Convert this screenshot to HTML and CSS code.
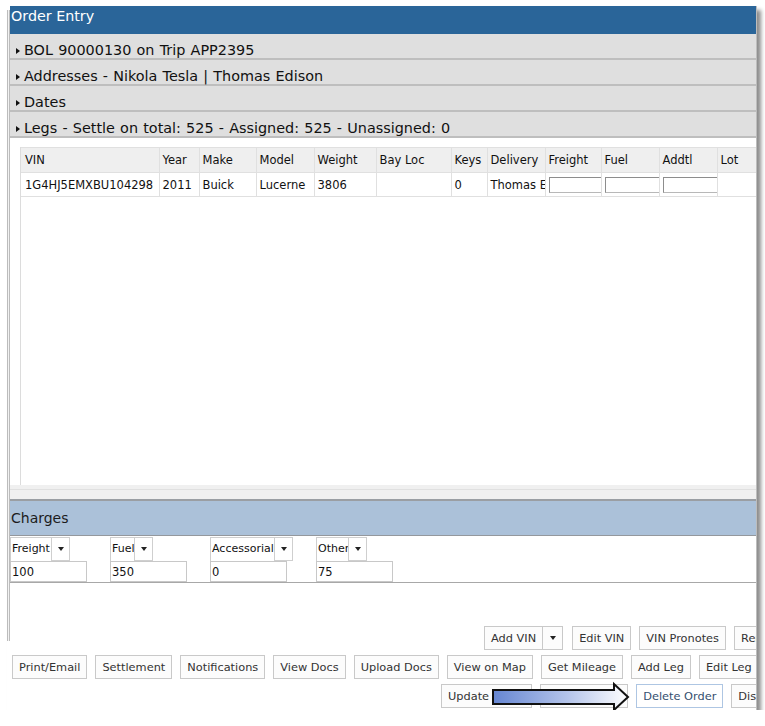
FILE: index.html
```html
<!DOCTYPE html>
<html lang="en">
<head>
    <meta charset="UTF-8">
    <meta name="viewport" content="width=device-width, initial-scale=1.0">
    <title>Order Entry</title>
    <link rel="stylesheet" href="styles.css">
</head>
<body>

    <div class="window">
        <div class="title">Order Entry</div>

        <!-- Collapsed sections -->
        <div class="section-head"><span class="caret"></span>BOL 90000130 on Trip APP2395</div>
        <div class="section-head"><span class="caret"></span>Addresses - Nikola Tesla | Thomas Edison</div>
        <div class="section-head"><span class="caret"></span>Dates</div>
        <div class="section-head"><span class="caret"></span>Legs - Settle on total: 525 - Assigned: 525 - Unassigned: 0</div>

        <!-- Legs grid -->
        <div class="legs">
            <div class="grid-box">
                <table class="legs-table">
                    <colgroup>
                        <col class="c-vin"><col class="c-year"><col class="c-make"><col class="c-model">
                        <col class="c-weight"><col class="c-bay"><col class="c-keys"><col class="c-delivery">
                        <col class="c-freight"><col class="c-fuel"><col class="c-addtl"><col class="c-lot">
                    </colgroup>
                    <thead>
                        <tr>
                            <th>VIN</th>
                            <th>Year</th>
                            <th>Make</th>
                            <th>Model</th>
                            <th>Weight</th>
                            <th>Bay Loc</th>
                            <th>Keys</th>
                            <th>Delivery</th>
                            <th>Freight</th>
                            <th>Fuel</th>
                            <th>Addtl</th>
                            <th>Lot</th>
                        </tr>
                    </thead>
                    <tbody>
                        <tr>
                            <td>1G4HJ5EMXBU104298</td>
                            <td>2011</td>
                            <td>Buick</td>
                            <td>Lucerne</td>
                            <td>3806</td>
                            <td></td>
                            <td>0</td>
                            <td>Thomas Edison</td>
                            <td class="input-cell"><input class="cell-input" type="text"></td>
                            <td class="input-cell"><input class="cell-input" type="text"></td>
                            <td class="input-cell"><input class="cell-input" type="text"></td>
                            <td></td>
                        </tr>
                    </tbody>
                </table>
            </div>
        </div>
        <div class="scroll-strip"></div>

        <!-- Charges -->
        <div class="charges-bar">Charges</div>
        <div class="charges">
            <div class="charge">
                <div class="charge-select"><span class="sel-text w-freight">Freight</span><span class="sel-arrow"></span></div>
                <input class="charge-input" type="text" value="100">
            </div>
            <div class="charge">
                <div class="charge-select"><span class="sel-text w-fuel">Fuel</span><span class="sel-arrow"></span></div>
                <input class="charge-input" type="text" value="350">
            </div>
            <div class="charge">
                <div class="charge-select"><span class="sel-text w-acc">Accessorial</span><span class="sel-arrow"></span></div>
                <input class="charge-input" type="text" value="0">
            </div>
            <div class="charge">
                <div class="charge-select"><span class="sel-text w-other">Other</span><span class="sel-arrow"></span></div>
                <input class="charge-input" type="text" value="75">
            </div>
        </div>

        <!-- Action buttons -->
        <div class="actions">
            <div class="btn-row row-top">
                <div class="split">
                    <button class="btn">Add VIN</button><button class="btn btn-drop"><span class="drop-caret"></span></button>
                </div>
                <button class="btn">Edit VIN</button>
                <button class="btn">VIN Pronotes</button>
                <button class="btn">Remove VIN</button>
            </div>
            <div class="btn-row row-mid">
                <button class="btn">Print/Email</button>
                <button class="btn">Settlement</button>
                <button class="btn">Notifications</button>
                <button class="btn">View Docs</button>
                <button class="btn">Upload Docs</button>
                <button class="btn">View on Map</button>
                <button class="btn">Get Mileage</button>
                <button class="btn">Add Leg</button>
                <button class="btn">Edit Leg</button>
                <button class="btn">Delete Leg</button>
            </div>
            <div class="btn-row row-bottom">
                <button class="btn">Update Order</button>
                <button class="btn">Cancel Order</button>
                <button class="btn btn-focus">Delete Order</button>
                <button class="btn">Dispatch</button>
            </div>
        </div>

        <!-- Callout arrow pointing at Delete Order -->
        <svg class="pointer-arrow" width="140" height="32" viewBox="0 0 140 32">
            <defs>
                <linearGradient id="arrowFill" x1="0" y1="0" x2="1" y2="0">
                    <stop offset="0" stop-color="#6686d2"/>
                    <stop offset="0.55" stop-color="#b4c4ea"/>
                    <stop offset="1" stop-color="#ffffff"/>
                </linearGradient>
            </defs>
            <path d="M2 9 H123 V3 L137 16 L123 29 V23 H2 Z" fill="url(#arrowFill)" stroke="#111" stroke-width="2"/>
        </svg>
    </div>

</body>
</html>
```

FILE: styles.css
```css
body {
    margin: 0;
    background-color: #fff;
    font-family: "DejaVu Sans", Verdana, sans-serif;
    color: #111;
}
.window {
    position: relative;
    width: 746px;
    height: 704px;
    margin: 6px 0 0 7px;
    padding-left: 3px;
    border-right: 1px solid #bdbdbd;
    box-shadow: 4px 4px 4px rgba(0, 0, 0, 0.45);
    background: #fff linear-gradient(to right, #bcbcbc 0 1px, #f2f2f2 1px 2px, #bcbcbc 2px 3px, transparent 3px) no-repeat 0 4px / 3px 631px;
    overflow: hidden;
    display: flex;
    flex-direction: column;
}
.title {
    flex-shrink: 0;
    height: 16px;
    padding: 2px 0 10px 1px;
    line-height: 16px;
    font-size: 14.3px;
    color: #fff;
    background-color: #2a6599;
}
.section-head {
    flex-shrink: 0;
    display: flex;
    align-items: center;
    gap: 4px;
    height: 16px;
    padding: 8px 0 0 6px;
    line-height: 16px;
    font-size: 14.4px;
    word-spacing: 0.6px;
    white-space: nowrap;
    background-color: #dfdfdf;
    border-bottom: 2px solid #bebebe;
}
.caret {
    width: 0;
    height: 0;
    border-left: 4px solid #111;
    border-top: 3px solid transparent;
    border-bottom: 3px solid transparent;
    margin-top: 1px;
}
.legs {
    flex-shrink: 0;
    padding: 9px 0 0 10px;
}
.grid-box {
    height: 338px;
    border-left: 1px solid #dcdcdc;
    overflow: hidden;
}
.legs-table {
    table-layout: fixed;
    border-collapse: collapse;
    width: 756px;
    font-size: 11.5px;
}
.c-vin { width: 138px; }
.c-year { width: 40px; }
.c-make { width: 57px; }
.c-model { width: 58px; }
.c-weight { width: 62px; }
.c-bay { width: 75px; }
.c-keys { width: 36px; }
.c-delivery { width: 58px; }
.c-freight { width: 56px; }
.c-fuel { width: 58px; }
.c-addtl { width: 58px; }
.c-lot { width: 60px; }
.legs-table th, .legs-table td {
    border: 1px solid #e0e0e0;
    padding: 0 3px;
    text-align: left;
    font-weight: normal;
    white-space: nowrap;
    overflow: hidden;
}
.legs-table th:first-child, .legs-table td:first-child {
    border-left: 0;
    padding-left: 4px;
}
.legs-table th {
    height: 24px;
    background-color: #efefef;
}
.legs-table td {
    height: 23px;
}
.legs-table td.input-cell {
    padding: 0 0 0 3px;
}
.cell-input {
    display: block;
    width: 55px;
    height: 16px;
    box-sizing: border-box;
    margin: 0;
    padding: 0;
    border: 1px solid #8d8d8d;
    border-bottom-color: #b8b8b8;
    border-right-color: #b8b8b8;
}
.scroll-strip {
    flex-shrink: 0;
    height: 14px;
    background: #f0f0f0 linear-gradient(#f0f0f0 0 4px, #e0e0e0 4px 5px, #f0f0f0 5px);
}
.charges-bar {
    flex-shrink: 0;
    height: 16px;
    padding: 9px 0 9px 1px;
    line-height: 16px;
    font-size: 14px;
    color: #1c1c1c;
    background-color: #abc1d9;
    border-top: 2px solid #9a9ea3;
    border-bottom: 1px solid #94989d;
}
.charges {
    flex-shrink: 0;
    display: flex;
    gap: 23px;
    padding-top: 1px;
    border-bottom: 1px solid #a8a8a8;
}
.charge {
    display: flex;
    flex-direction: column;
    align-items: flex-start;
}
.charge-select {
    display: flex;
    height: 24px;
}
.sel-text {
    box-sizing: border-box;
    height: 24px;
    padding-left: 1px;
    line-height: 22px;
    font-size: 11px;
    white-space: nowrap;
    overflow: hidden;
    border: 1px solid #cfcfcf;
    border-bottom: 0;
}
.w-freight { width: 42px; }
.w-fuel { width: 25px; }
.w-acc { width: 65px; }
.w-other { width: 33px; }
.sel-arrow {
    box-sizing: border-box;
    width: 18px;
    height: 24px;
    border: 1px solid #cfcfcf;
    border-left: 0;
    display: flex;
    align-items: center;
    justify-content: center;
}
.sel-arrow::after, .drop-caret {
    content: "";
    width: 0;
    height: 0;
    border-top: 4px solid #222;
    border-left: 3.5px solid transparent;
    border-right: 3.5px solid transparent;
}
.charge-input {
    box-sizing: border-box;
    width: 77px;
    height: 21px;
    margin: 0;
    padding: 0 0 0 1px;
    font-family: inherit;
    font-size: 11.5px;
    color: #111;
    border: 1px solid #c8c8c8;
}
.actions {
    flex-shrink: 0;
    display: flex;
    flex-direction: column;
    gap: 5px;
    padding-top: 43px;
}
.btn-row {
    display: flex;
    gap: 8px;
}
.row-top { padding-left: 474px; }
.row-mid { padding-left: 2px; }
.row-bottom { padding-left: 431px; }
.split {
    display: flex;
    flex-shrink: 0;
    margin-right: 1px;
}
.btn {
    flex-shrink: 0;
    box-sizing: border-box;
    height: 24px;
    padding: 0 6px;
    font-family: inherit;
    font-size: 11.35px;
    color: #333;
    white-space: nowrap;
    background-color: #fcfcfc;
    border: 1px solid #c9c9c9;
    border-radius: 0;
}
.btn-drop {
    width: 20px;
    padding: 0;
    border-left: 0;
    display: flex;
    align-items: center;
    justify-content: center;
}
.btn-focus {
    color: #35506f;
    background-color: #fff;
    border-color: #aec6e3;
}
.pointer-arrow {
    position: absolute;
    left: 484px;
    top: 675px;
}
```
